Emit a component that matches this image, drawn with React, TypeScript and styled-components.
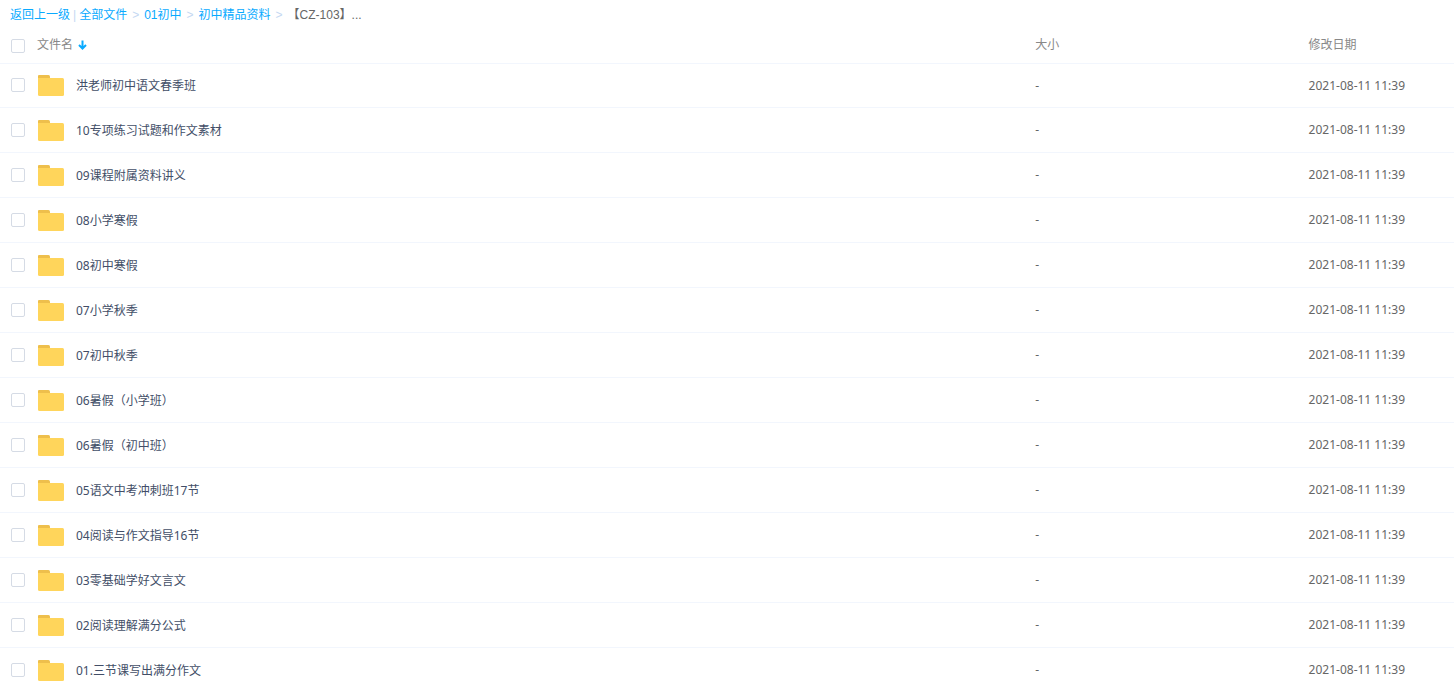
import React, { useState } from "react";
import styled, { createGlobalStyle } from "styled-components";

const GlobalStyle = createGlobalStyle`
  * { box-sizing: border-box; }
  body {
    margin: 0;
    background: #fff;
    color: #424e67;
    font: 12px/18px "Noto Sans", "Noto Sans CJK SC", sans-serif;
  }
`;

const Page = styled.main`
  height: 100vh;
  overflow: hidden;
`;

const Breadcrumb = styled.nav`
  display: flex;
  align-items: center;
  height: 28px;
  padding: 2px 10px 0;
  font-family: "Liberation Sans", "Noto Sans CJK SC", sans-serif;
  white-space: nowrap;
`;

const Crumb = styled.a`
  color: #09aaff;
  text-decoration: none;
`;

const Divider = styled.span`
  margin: 0 3px;
  color: #c4d8f2;
`;

const Chevron = styled.span`
  margin: 0 5px;
  color: #c4d8f2;
`;

const Current = styled.span`
  color: #666;
`;

const FileTable = styled.table`
  width: 100%;
  table-layout: fixed;
  border-collapse: separate;
  border-spacing: 0;
`;

const Column = styled.col<{ $share: string }>`
  width: ${(p) => p.$share};
`;

const HeadCell = styled.th`
  height: 36px;
  padding: 0 0 2px;
  border-bottom: 1px solid #f2f6fd;
  color: #888;
  font-weight: 400;
  text-align: left;
`;

const Cell = styled.td<{ $muted?: boolean }>`
  height: 45px;
  padding: 0;
  border-bottom: 1px solid #f2f6fd;
  color: ${(p) => (p.$muted ? "#666" : "#424e67")};
  white-space: nowrap;

  tr:first-child > & {
    height: 44px;
  }
`;

const NameLine = styled.div`
  display: flex;
  align-items: flex-start;
  padding-left: 11px;
`;

const Check = styled.input`
  appearance: none;
  flex: none;
  width: 14px;
  height: 14px;
  margin: 3px 0 0;
  border: 1px solid #d5dbe5;
  border-radius: 2px;
  background: #fff;

  &:checked {
    border-color: #09aaff;
    background: #09aaff;
  }
`;

const SortButton = styled.button`
  display: flex;
  align-items: center;
  gap: 5px;
  margin-left: 12px;
  padding: 0;
  border: 0;
  background: none;
  color: inherit;
  font: inherit;
`;

const FileLabel = styled.label`
  display: flex;
  align-items: flex-start;
  gap: 12px;
  margin-left: 13px;
`;

const FileName = styled.span`
  padding-top: 2px;
`;

const FolderIcon = () => (
  <svg width="26" height="21" viewBox="0 1 26 21" aria-hidden="true">
    <path d="M0 6V2Q0 1 1 1H10.5Q12 1 12 2.5V6Z" fill="#eebf4c" />
    <path d="M0 4H24.5Q26 4 26 5.5V20.5Q26 22 24.5 22H1.5Q0 22 0 20.5Z" fill="#ffd55b" />
  </svg>
);

const SortArrow = () => (
  <svg width="9" height="10" viewBox="0 0 9 10" aria-hidden="true">
    <path d="M4.5 0.5V8M1 5L4.5 8.5L8 5" fill="none" stroke="#09aaff" strokeWidth="2" />
  </svg>
);

const parents = ["全部文件", "01初中", "初中精品资料"];

const files = [
  "洪老师初中语文春季班",
  "10专项练习试题和作文素材",
  "09课程附属资料讲义",
  "08小学寒假",
  "08初中寒假",
  "07小学秋季",
  "07初中秋季",
  "06暑假（小学班）",
  "06暑假（初中班）",
  "05语文中考冲刺班17节",
  "04阅读与作文指导16节",
  "03零基础学好文言文",
  "02阅读理解满分公式",
  "01.三节课写出满分作文",
];

export default function App() {
  const [selected, setSelected] = useState<string[]>([]);

  const toggle = (name: string) =>
    setSelected((s) => (s.includes(name) ? s.filter((n) => n !== name) : [...s, name]));

  return (
    <Page>
      <GlobalStyle />
      <Breadcrumb>
        <Crumb href="#">返回上一级</Crumb>
        <Divider>|</Divider>
        {parents.map((name) => (
          <React.Fragment key={name}>
            <Crumb href="#">{name}</Crumb>
            <Chevron>&gt;</Chevron>
          </React.Fragment>
        ))}
        <Current>【CZ-103】...</Current>
      </Breadcrumb>
      <FileTable>
        <colgroup>
          <Column $share="71.2%" />
          <Column $share="18.8%" />
          <Column $share="10%" />
        </colgroup>
        <thead>
          <tr>
            <HeadCell>
              <NameLine>
                <Check
                  type="checkbox"
                  aria-label="全选"
                  checked={selected.length === files.length}
                  onChange={(e) => setSelected(e.target.checked ? files : [])}
                />
                <SortButton type="button">
                  文件名
                  <SortArrow />
                </SortButton>
              </NameLine>
            </HeadCell>
            <HeadCell>大小</HeadCell>
            <HeadCell>修改日期</HeadCell>
          </tr>
        </thead>
        <tbody>
          {files.map((name, i) => (
            <tr key={name}>
              <Cell>
                <NameLine>
                  <Check
                    type="checkbox"
                    id={`file-${i}`}
                    checked={selected.includes(name)}
                    onChange={() => toggle(name)}
                  />
                  <FileLabel htmlFor={`file-${i}`}>
                    <FolderIcon />
                    <FileName>{name}</FileName>
                  </FileLabel>
                </NameLine>
              </Cell>
              <Cell $muted>-</Cell>
              <Cell $muted>2021-08-11 11:39</Cell>
            </tr>
          ))}
        </tbody>
      </FileTable>
    </Page>
  );
}
